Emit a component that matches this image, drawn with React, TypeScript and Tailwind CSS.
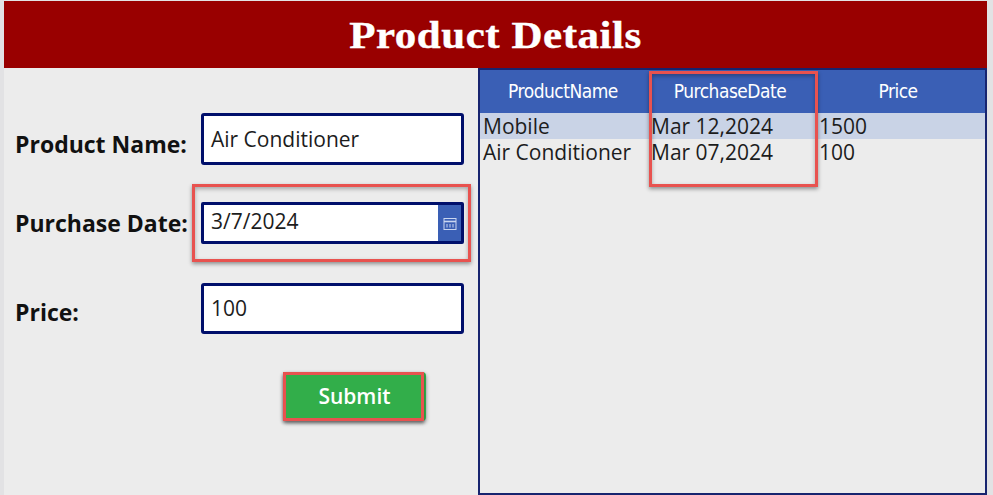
const bodyFont = "font-['Open_Sans','Noto_Sans',sans-serif]";

function CalendarIcon() {
  return (
    <svg width="14" height="14" viewBox="0 0 14 14" fill="none" stroke="#c9d6f0" strokeWidth="1">
      <rect x="1" y="1.5" width="12" height="11" />
      <path d="M1 4.5h12" strokeWidth="1.6" />
      <path d="M4 7v3.5M7 7v3.5M10 7v3.5" />
    </svg>
  );
}

function FieldLabel({ text, className }: { text: string; className: string }) {
  return <div className={`w-[197px] shrink-0 pl-[11px] text-[23px] leading-[30px] font-bold text-[#111] whitespace-nowrap ${className}`}>{text}</div>;
}

function TextBox({ value, className }: { value: string; className: string }) {
  return (
    <div className={`flex w-[263px] shrink-0 items-start rounded-[3px] border-[3px] border-[#000f6b] bg-white pl-[7px] text-[21px] leading-[27px] text-[#1c1c1c] ${className}`}>
      {value}
    </div>
  );
}

export default function App() {
  return (
    <div className={`relative h-[495px] w-[993px] overflow-hidden bg-[#e2e2e4] pt-px ${bodyFont}`}>
      {/* Title bar */}
      <div className="ml-[4px] mr-[6px] flex h-[67px] items-center justify-center bg-[#990000]">
        <h1 className="scale-x-[1.13] font-['Liberation_Serif',serif] text-[38px] leading-none font-bold tracking-[0.5px] text-white [-webkit-text-stroke:0.4px_white]">Product Details</h1>
      </div>

      <div className="ml-[4px] mr-[6px] flex h-[427px] bg-[#ececec]">
        {/* Form */}
        <div className="w-[474px] shrink-0 pt-[45px]">
          <div className="flex">
            <FieldLabel text="Product Name:" className="pt-[16px]" />
            <TextBox value="Air Conditioner" className="h-[52px] pt-[10px]" />
          </div>

          <div className="mt-[37px] flex">
            <FieldLabel text="Purchase Date:" className="pt-[6px]" />
            <div className="flex h-[42px] w-[263px] shrink-0 rounded-[2px] border-[3px] border-[#000f6b] bg-white text-[21px] leading-[27px] text-[#1c1c1c]">
              <div className="flex-1 pl-[7px] pt-[3px]">3/7/2024</div>
              <div className="flex w-[23px] items-center justify-center bg-[#3a5fb5] pt-[1px]">
                <CalendarIcon />
              </div>
            </div>
          </div>

          <div className="mt-[39px] flex">
            <FieldLabel text="Price:" className="pt-[14px]" />
            <TextBox value="100" className="h-[51px] pt-[9px]" />
          </div>

          <div className="mt-[38px] ml-[279px] flex h-[49px] w-[143px] items-center justify-center rounded-[4px] bg-[#32ae4a] pt-[1px] text-[21px] font-semibold text-white shadow-[0_2px_4px_rgba(0,0,0,0.45)]">
            Submit
          </div>
        </div>

        {/* Data table */}
        <div className="flex-1 border-2 border-[#17246f] text-[21px] leading-[26px] text-[#1c1c1c]">
          <div className="grid h-[43px] grid-cols-[166px_168px_1fr] items-center bg-[#3a5fb5] pr-[3px] pb-[2px] text-center font-['DejaVu_Sans',sans-serif] text-[19px] tracking-[-0.5px] [font-stretch:condensed] text-white">
            <div>ProductName</div>
            <div>PurchaseDate</div>
            <div>Price</div>
          </div>
          <div className="grid h-[26px] grid-cols-[168px_170px_1fr] bg-[#c9d3e6]">
            <div className="pl-[3px]">Mobile</div>
            <div className="pl-[3px]">Mar 12,2024</div>
            <div className="pl-[1px]">1500</div>
          </div>
          <div className="grid h-[26px] grid-cols-[168px_170px_1fr]">
            <div className="pl-[3px]">Air Conditioner</div>
            <div className="pl-[3px]">Mar 07,2024</div>
            <div className="pl-[1px]">100</div>
          </div>
        </div>
      </div>

      {/* Red annotation boxes drawn over the screenshot */}
      <div className="absolute top-[184px] left-[192px] h-[78px] w-[279px] border-[3px] border-[#e8524f] shadow-[0_2px_4px_rgba(0,0,0,0.4),inset_0_2px_4px_rgba(0,0,0,0.3)]" />
      <div className="absolute top-[71px] left-[649px] h-[116px] w-[169px] border-[3px] border-[#e8524f] shadow-[0_2px_4px_rgba(0,0,0,0.4),inset_0_2px_4px_rgba(0,0,0,0.3)]" />
      <div className="absolute top-[372px] left-[283px] h-[49px] w-[141px] border-[3px] border-[#e8524f] shadow-[0_2px_3px_rgba(0,0,0,0.3)]" />
    </div>
  );
}
